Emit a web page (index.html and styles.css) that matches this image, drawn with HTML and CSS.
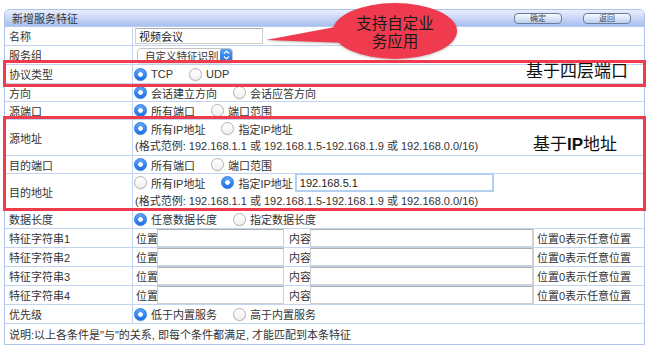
FILE: index.html
```html
<!DOCTYPE html>
<html lang="zh-CN">
<head>
    <meta charset="UTF-8">
    <title>新增服务特征</title>
    <link rel="stylesheet" href="styles.css">
</head>
<body>
<div class="page">
    <div class="panel">
        <div class="panel-head">
            <span class="panel-title">新增服务特征</span>
            <div class="panel-actions">
                <button class="btn">确定</button>
                <button class="btn">返回</button>
            </div>
        </div>

        <div class="row">
            <div class="label">名称</div>
            <div class="value"><input class="text name-input" value="视频会议"></div>
        </div>
        <div class="row">
            <div class="label">服务组</div>
            <div class="value">
                <span class="select">
                    <span class="select-text">自定义特征识别</span>
                    <span class="stepper">
                        <svg width="7" height="10" viewBox="0 0 7 10"><path d="M1 3.5 L3.5 1 L6 3.5 M1 6.5 L3.5 9 L6 6.5" fill="none" stroke="#fff" stroke-width="1.2"/></svg>
                    </span>
                </span>
            </div>
        </div>
        <div class="row">
            <div class="label">协议类型</div>
            <div class="value options">
                <label class="opt"><input type="radio" name="proto" checked>TCP</label>
                <label class="opt"><input type="radio" name="proto">UDP</label>
            </div>
        </div>
        <div class="row tight">
            <div class="label">方向</div>
            <div class="value options">
                <label class="opt"><input type="radio" name="dir" checked>会话建立方向</label>
                <label class="opt"><input type="radio" name="dir">会话应答方向</label>
            </div>
        </div>
        <div class="row tight">
            <div class="label">源端口</div>
            <div class="value options">
                <label class="opt"><input type="radio" name="sport" checked>所有端口</label>
                <label class="opt"><input type="radio" name="sport">端口范围</label>
            </div>
        </div>
        <div class="row double">
            <div class="label">源地址</div>
            <div class="value stack">
                <div class="options">
                    <label class="opt"><input type="radio" name="saddr" checked>所有IP地址</label>
                    <label class="opt"><input type="radio" name="saddr">指定IP地址</label>
                </div>
                <div class="hint">(格式范例: 192.168.1.1 或 192.168.1.5-192.168.1.9 或 192.168.0.0/16)</div>
            </div>
        </div>
        <div class="row tight">
            <div class="label">目的端口</div>
            <div class="value options">
                <label class="opt"><input type="radio" name="dport" checked>所有端口</label>
                <label class="opt"><input type="radio" name="dport">端口范围</label>
            </div>
        </div>
        <div class="row double">
            <div class="label">目的地址</div>
            <div class="value stack">
                <div class="options">
                    <label class="opt"><input type="radio" name="daddr">所有IP地址</label>
                    <label class="opt"><input type="radio" name="daddr" checked>指定IP地址</label>
                    <input class="text ip-input" value="192.168.5.1">
                </div>
                <div class="hint">(格式范例: 192.168.1.1 或 192.168.1.5-192.168.1.9 或 192.168.0.0/16)</div>
            </div>
        </div>
        <div class="row">
            <div class="label">数据长度</div>
            <div class="value options">
                <label class="opt"><input type="radio" name="len" checked>任意数据长度</label>
                <label class="opt"><input type="radio" name="len">指定数据长度</label>
            </div>
        </div>
        <div class="row">
            <div class="label">特征字符串1</div>
            <div class="value feature">
                <span class="cap">位置</span><input class="text pos-input">
                <span class="cap cap-content">内容</span><input class="text content-input">
                <span class="note">位置0表示任意位置</span>
            </div>
        </div>
        <div class="row">
            <div class="label">特征字符串2</div>
            <div class="value feature">
                <span class="cap">位置</span><input class="text pos-input">
                <span class="cap cap-content">内容</span><input class="text content-input">
                <span class="note">位置0表示任意位置</span>
            </div>
        </div>
        <div class="row">
            <div class="label">特征字符串3</div>
            <div class="value feature">
                <span class="cap">位置</span><input class="text pos-input">
                <span class="cap cap-content">内容</span><input class="text content-input">
                <span class="note">位置0表示任意位置</span>
            </div>
        </div>
        <div class="row">
            <div class="label">特征字符串4</div>
            <div class="value feature">
                <span class="cap">位置</span><input class="text pos-input">
                <span class="cap cap-content">内容</span><input class="text content-input">
                <span class="note">位置0表示任意位置</span>
            </div>
        </div>
        <div class="row">
            <div class="label">优先级</div>
            <div class="value options">
                <label class="opt"><input type="radio" name="prio" checked>低于内置服务</label>
                <label class="opt"><input type="radio" name="prio">高于内置服务</label>
            </div>
        </div>
        <div class="row last">
            <div class="remark">说明:以上各条件是"与"的关系, 即每个条件都满足, 才能匹配到本条特征</div>
        </div>
    </div>

    <!-- annotations -->
    <div class="callout">
        <svg class="callout-shape" width="196" height="62" viewBox="0 0 196 62">
            <polygon points="2,38 82,23 82,41" fill="#f03b4e"/>
            <ellipse cx="131" cy="29" rx="62" ry="28" fill="#f03b4e"/>
        </svg>
        <div class="callout-text">支持自定业<br>务应用</div>
    </div>
    <div class="mark mark-l4"></div>
    <div class="mark-text mark-text-l4">基于四层端口</div>
    <div class="mark mark-ip"></div>
    <div class="mark-text mark-text-ip">基于<b>IP</b>地址</div>
</div>
</body>
</html>
```

FILE: styles.css
```css
* {
    box-sizing: border-box;
    margin: 0;
    padding: 0;
}

body {
    background: #fff;
    font-family: 'Liberation Sans', 'Noto Sans CJK SC', sans-serif;
    font-size: 11px;
    color: #333;
}

.page {
    position: relative;
    width: 651px;
    height: 347px;
    padding: 9px 0 0 4px;
}

.panel {
    width: 641px;
    border: 1px solid #aec3ec;
    border-radius: 5px 5px 0 0;
    background: #fff;
}

.panel-head {
    display: flex;
    align-items: center;
    justify-content: space-between;
    height: 17px;
    padding: 0 13px 0 7px;
    background: linear-gradient(#e9eefc, #c3d2f5 60%, #a9bff0);
    border-radius: 4px 4px 0 0;
    border-bottom: 1px solid #b7caf0;
}

.panel-title {
    font-size: 11px;
    color: #333;
}

.panel-actions {
    display: flex;
    gap: 21px;
}

.btn {
    width: 48px;
    height: 11px;
    font-family: 'Liberation Sans', 'Noto Sans CJK SC', sans-serif;
    font-size: 8px;
    line-height: 9px;
    color: #445;
    border: 1px solid #6c7c96;
    border-radius: 4px;
    background: linear-gradient(#f7faff, #d5e2f6 60%, #b9cdee);
}

.row {
    display: flex;
    height: 19px;
    border-bottom: 1px solid #c3d4f1;
}

.row.tight {
    height: 18px;
}

.row.double {
    height: 36px;
}

.row.last {
    height: 20px;
    border-bottom: none;
}

.label {
    width: 128px;
    padding-left: 4px;
    display: flex;
    align-items: center;
    border-right: 1px solid #c3d4f1;
}

.value {
    flex: 1;
    display: flex;
    align-items: center;
    padding-left: 1px;
}

.options {
    display: flex;
    align-items: center;
    gap: 16px;
}

.stack {
    flex-direction: column;
    align-items: flex-start;
    justify-content: center;
    gap: 1px;
}

.stack .options {
    height: 18px;
}

.hint {
    height: 17px;
    line-height: 17px;
    padding-left: 1px;
}

.opt {
    display: flex;
    align-items: center;
    white-space: nowrap;
}

.opt input {
    appearance: none;
    width: 13px;
    height: 13px;
    margin: 0 4px 0 0;
    border-radius: 50%;
    border: 1px solid #b4b4b4;
    background: linear-gradient(#fff, #f0f0f0);
    box-shadow: 0 0.5px 1px rgba(0, 0, 0, 0.15);
}

.opt input:checked {
    border-color: #2a7be6;
    background: radial-gradient(circle, #fff 0 2px, transparent 2.6px), linear-gradient(#5fa6f8, #1c70e5);
}

.text {
    height: 16px;
    font-family: 'Liberation Sans', 'Noto Sans CJK SC', sans-serif;
    font-size: 11px;
    color: #222;
    padding: 0 3px;
    border: 1px solid #cfcfcf;
    border-top-color: #adadad;
    background: #fff;
    outline: none;
}

.name-input {
    width: 128px;
    margin-left: 1px;
}

.select {
    display: flex;
    align-items: center;
    justify-content: space-between;
    width: 96px;
    height: 15px;
    margin-left: 3px;
    padding-left: 7px;
    border: 1px solid #c4c4c4;
    border-radius: 4px;
    background: #fff;
    box-shadow: 0 1px 1px rgba(0, 0, 0, 0.12);
    white-space: nowrap;
    overflow: hidden;
}

.select-text {
    font-size: 10.5px;
}

.stepper {
    display: flex;
    align-items: center;
    justify-content: center;
    flex: none;
    width: 13px;
    height: 15px;
    margin-right: -1px;
    border-radius: 4px;
    background: linear-gradient(#5aa3f8, #1d6fe2);
}

.ip-input {
    width: 199px;
    height: 19px;
    margin-left: -14px;
    border: 2px solid #b3cff2;
    padding: 0 3px;
    font-size: 11px;
}

.feature {
    padding-left: 3px;
}

.cap {
    width: 21px;
    white-space: nowrap;
}

.cap-content {
    width: 26px;
    padding-left: 5px;
}

.feature .text {
    height: 18px;
    align-self: flex-start;
}

.pos-input {
    width: 127px;
}

.content-input {
    width: 223px;
}

.note {
    flex: 1;
    height: 100%;
    display: flex;
    align-items: center;
    padding-left: 3px;
    border-left: 1px solid #c3d4f1;
}

.remark {
    padding-left: 4px;
    display: flex;
    align-items: center;
}

/* annotations drawn over the form */
.callout {
    position: absolute;
    left: 264px;
    top: 2px;
    width: 196px;
    height: 62px;
}

.callout-shape {
    position: absolute;
    left: 0;
    top: 0;
    filter: drop-shadow(0 1px 1px rgba(0, 0, 0, 0.25));
}

.callout-text {
    position: absolute;
    left: 69px;
    top: 13px;
    width: 124px;
    text-align: center;
    font-family: 'Liberation Sans', 'Noto Sans CJK SC', sans-serif;
    font-size: 15.5px;
    line-height: 18px;
    color: #1a1a1a;
}

.mark {
    position: absolute;
    left: 3px;
    width: 643px;
    border: 3px solid #ef3b4c;
}

.mark-l4 {
    top: 60px;
    height: 27px;
}

.mark-ip {
    top: 116px;
    height: 95px;
}

.mark-text {
    position: absolute;
    font-family: 'Liberation Sans', 'Noto Sans CJK SC', sans-serif;
    font-size: 17px;
    line-height: 20px;
    color: #111;
}

.mark-text-l4 {
    left: 526px;
    top: 62px;
}

.mark-text-ip {
    left: 533px;
    top: 135px;
}
```
